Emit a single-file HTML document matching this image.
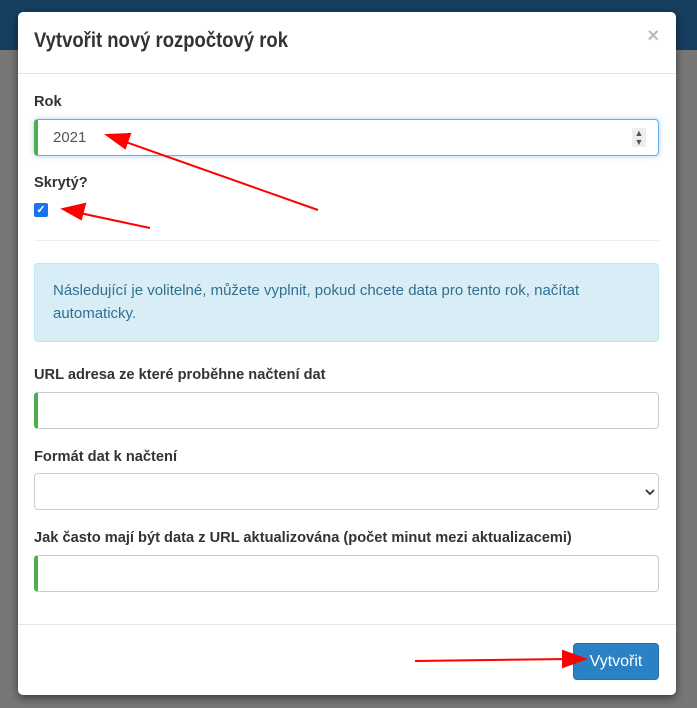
<!DOCTYPE html>
<html><head><meta charset="utf-8"><style>
*{box-sizing:border-box}
body{margin:0;width:697px;height:708px;background:#777;position:relative;overflow:hidden;font-family:"Liberation Sans",sans-serif}
.top{position:absolute;left:0;top:0;width:697px;height:50px;background:#163f5f}
.modal{position:absolute;left:18px;top:12px;width:658px;height:683px;background:#fff;border-radius:5px;box-shadow:0 3px 9px rgba(0,0,0,.5)}
.hd{height:62px;border-bottom:1px solid #e5e5e5;position:relative}
.hd h4{margin:0;position:absolute;left:16px;top:17px;font-size:21px;font-weight:bold;color:#333;transform:scaleX(0.88);transform-origin:left;white-space:nowrap}
.x{position:absolute;right:17px;top:13px;color:#bbb;font-weight:bold;font-size:20px}
.lbl{position:absolute;left:16px;font-weight:bold;font-size:15px;color:#333;transform:scaleX(0.975);transform-origin:left;white-space:nowrap}
.in{position:absolute;left:16px;width:625px;height:37px;border:1px solid #ccc;border-left:4px solid #4cae4c;border-radius:4px;background:#fff}
.alert{position:absolute;left:16px;top:251px;width:625px;height:79px;background:#d9edf7;border:1px solid #bce8f1;border-radius:4px;color:#31708f;font-size:15px;line-height:23px;padding:15px 60px 0 18px}
.btn{position:absolute;left:555px;top:631px;width:86px;height:37px;background:#2a81c4;border:1px solid #2a6fa8;border-radius:4px;color:#fff;font-size:16px;text-align:center;line-height:35px}
</style></head><body>
<div class="top"></div>
<div class="modal">
<div class="hd"><h4>Vytvořit nový rozpočtový rok</h4><span class="x">×</span></div>
<div class="lbl" style="top:81px">Rok</div>
<div class="in" style="top:107px;border-color:#66afe9;border-left-color:#4cae4c;box-shadow:0 0 6px rgba(102,175,233,.6)"><span style="position:absolute;left:15px;top:9px;font-size:15px;color:#555">2021</span><span style="position:absolute;right:12px;top:8px;width:14px;height:19px;background:#eee;font-size:9px;line-height:9px;text-align:center;color:#555;padding-top:1px">▲<br>▼</span></div>
<div class="lbl" style="top:162px">Skrytý?</div>
<div style="position:absolute;left:16px;top:191px;width:14px;height:14px;background:#1a73e8;border-radius:2px;color:#fff;font-size:11px;line-height:14px;text-align:center;font-weight:bold">✓</div>
<div style="position:absolute;left:16px;top:228px;width:625px;height:1px;background:#eee"></div>
<div class="alert">Následující je volitelné, můžete vyplnit, pokud chcete data pro tento rok, načítat automaticky.</div>
<div class="lbl" style="top:354px">URL adresa ze které proběhne načtení dat</div>
<div class="in" style="top:380px"></div>
<div class="lbl" style="top:436px">Formát dat k načtení</div>
<div class="in" style="top:461px;border-left:1px solid #ccc"><svg width="10" height="8" style="position:absolute;right:3px;top:14px"><path d="M1 2 L5 6 L9 2" stroke="#333" stroke-width="1.8" fill="none"/></svg></div>
<div class="lbl" style="top:517px">Jak často mají být data z URL aktualizována (počet minut mezi aktualizacemi)</div>
<div class="in" style="top:543px"></div>
<div style="position:absolute;left:0;top:612px;width:658px;height:1px;background:#e5e5e5"></div>
<div class="btn">Vytvořit</div>
</div>
<svg width="697" height="708" style="position:absolute;left:0;top:0">
<g stroke="red" stroke-width="2" fill="red">
<line x1="318" y1="210" x2="120" y2="140"/><polygon points="107,135 130,134 125,148"/>
<line x1="150" y1="228" x2="75" y2="212"/><polygon points="63,209 85,204 81,219"/>
<line x1="415" y1="661" x2="570" y2="659"/><polygon points="585,659 563,651 563,667"/>
</g></svg>
</body></html>
